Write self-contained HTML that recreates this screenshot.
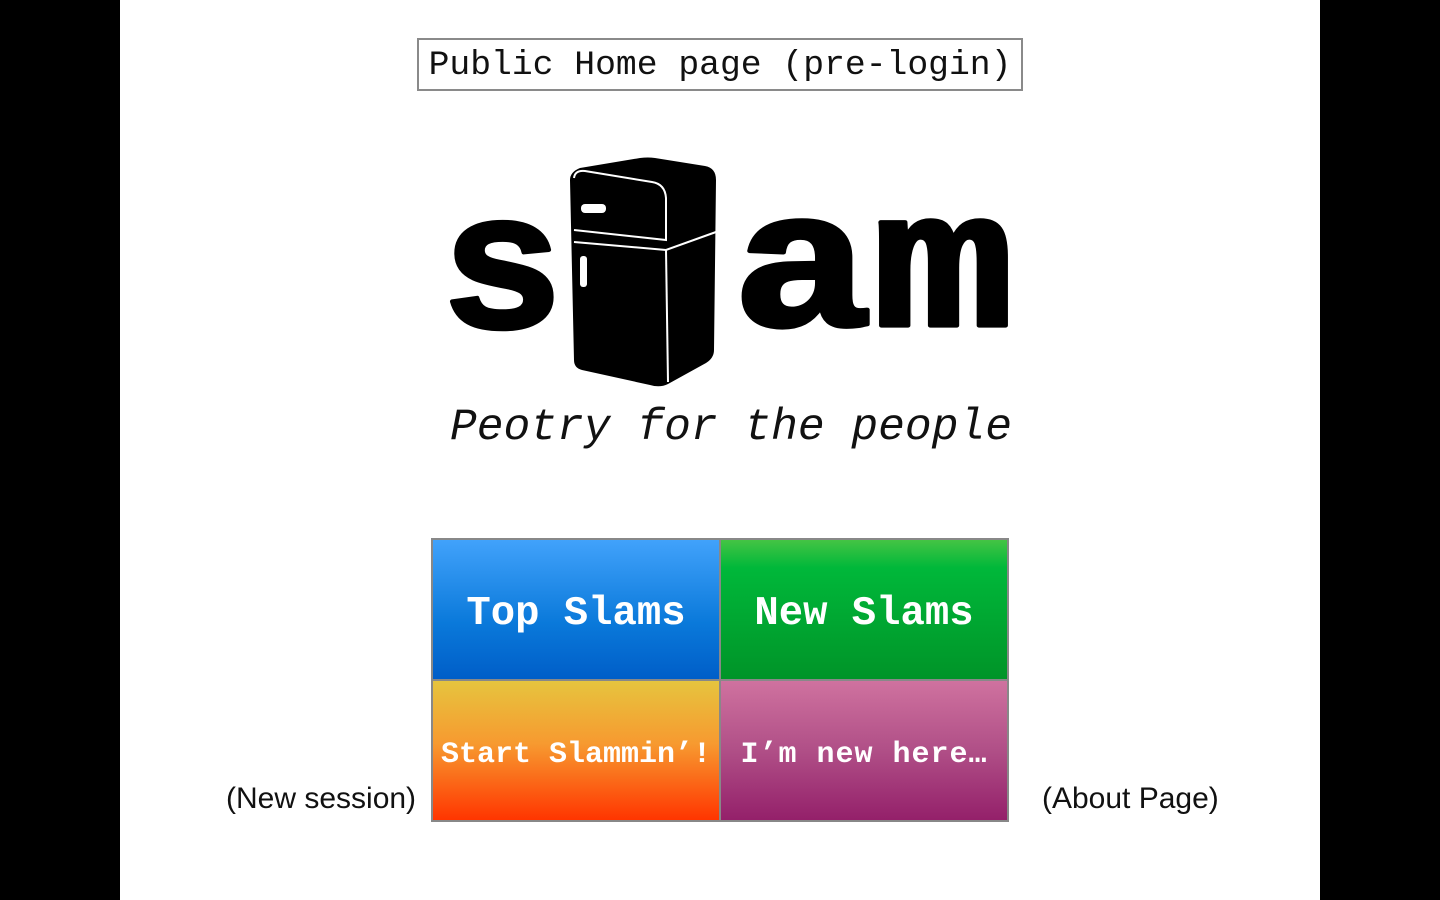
<!DOCTYPE html>
<html><head><meta charset="utf-8"><style>
*{margin:0;padding:0;box-sizing:border-box}
body{width:1440px;height:900px;background:#000;position:relative;overflow:hidden}
#page{position:absolute;left:120px;top:0;width:1200px;height:900px;background:#fff}
.abs{position:absolute;white-space:nowrap}
.mono{font-family:"Liberation Mono",monospace}
.title{left:417px;top:38px;width:606px;height:53px;border:2px solid #8a8a8a;font-size:34.7px;line-height:51px;text-align:center;color:#111}
.grid{left:431px;top:538px;width:578px;height:284px;background:#888;}
.cell{position:absolute;color:#fff;font-family:"Liberation Mono",monospace;font-weight:bold;display:flex;align-items:center;justify-content:center;white-space:nowrap;padding-top:8px}
.side{font-family:"Liberation Sans",sans-serif;font-size:30px;color:#111}
</style></head><body>
<div id="page"></div>
<div class="abs mono title">Public Home page (pre-login)</div>
<svg class="abs" style="left:0;top:0" width="1440" height="470">
<g transform="scale(1,0.85)" stroke="#000" stroke-width="5" stroke-linejoin="round">
<text x="440" y="385" font-family="'Liberation Mono', monospace" font-weight="bold" font-size="230" fill="#000" textLength="124" lengthAdjust="spacingAndGlyphs">s</text>
<text x="732" y="383" font-family="'Liberation Mono', monospace" font-weight="bold" font-size="230" fill="#000" textLength="282" lengthAdjust="spacingAndGlyphs">am</text>
</g>
<path d="M570 180 Q570 172 580 168 L640 158 Q648 157 655 158 L705 166 Q716 168 716 180 L714 350 Q714 358 706 363 L668 384 Q660 388 650 385 L582 370 Q574 368 574 360 Z" fill="#000"/>
<path d="M574 178 Q575 170 585 171 L652 182 Q665 184 666 198 L666 240 L574 230" fill="none" stroke="#fff" stroke-width="2"/>
<path d="M574 242 L666 250 L716 232" fill="none" stroke="#fff" stroke-width="2"/>
<path d="M666 250 L668 382" fill="none" stroke="#fff" stroke-width="2"/>
<rect x="581" y="204" width="25" height="9" rx="4" fill="#fff"/>
<rect x="580" y="256" width="7" height="31" rx="3" fill="#fff"/>
<text x="450" y="439" font-family="'Liberation Mono', monospace" font-style="italic" font-size="44.6" fill="#111">Peotry for the people</text>
</svg>
<div class="abs grid">
<div class="cell" style="left:2px;top:2px;width:286px;height:139px;background:linear-gradient(#41a2fb,#0a79da 60%,#005ec8);font-size:40.6px">Top Slams</div>
<div class="cell" style="left:290px;top:2px;width:286px;height:139px;background:linear-gradient(#44c444,#00b83a 20%,#009428);font-size:40.6px">New Slams</div>
<div class="cell" style="left:2px;top:143px;width:286px;height:139px;background:linear-gradient(#e6c43e,#f79a30 45%,#ff3500);font-size:30px">Start Slammin’!</div>
<div class="cell" style="left:290px;top:143px;width:286px;height:139px;background:linear-gradient(#cf729f,#b04f87 50%,#94206a);font-size:30px;letter-spacing:1px">I’m new here…</div>
</div>
<div class="abs side" style="left:226px;top:782px">(New session)</div>
<div class="abs side" style="left:1042px;top:782px">(About Page)</div>
</body></html>
